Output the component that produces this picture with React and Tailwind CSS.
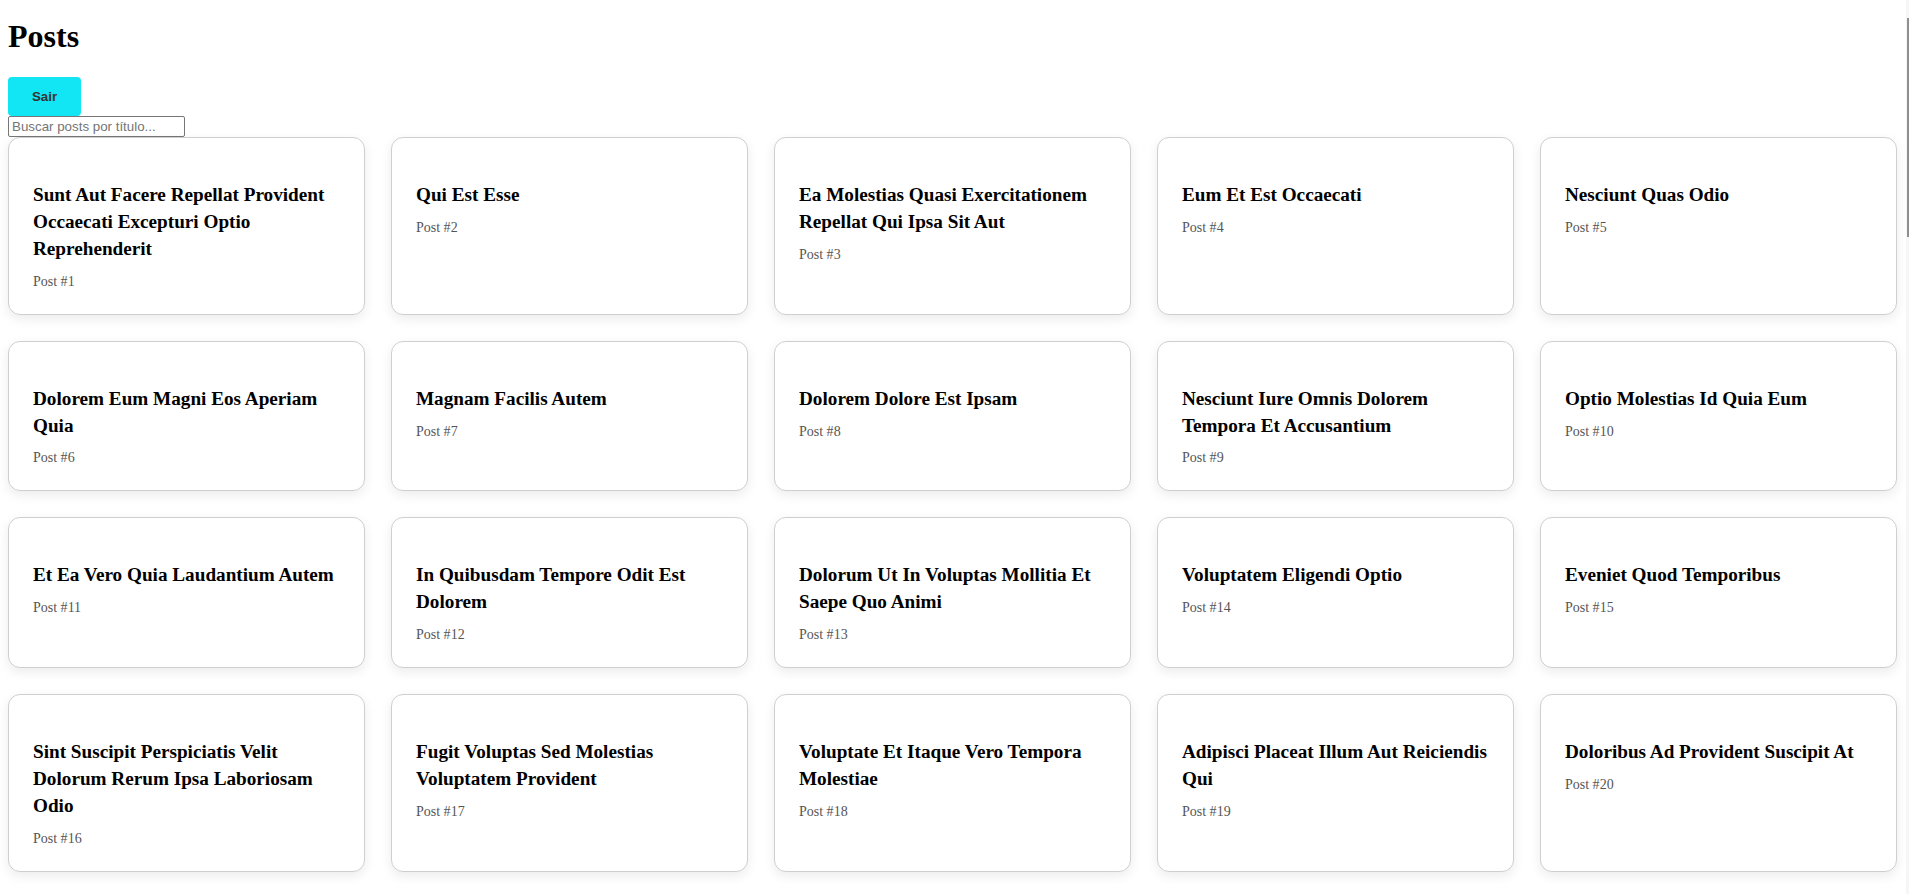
import React from "react";

const posts = [
  "Sunt Aut Facere Repellat Provident Occaecati Excepturi Optio Reprehenderit",
  "Qui Est Esse",
  "Ea Molestias Quasi Exercitationem Repellat Qui Ipsa Sit Aut",
  "Eum Et Est Occaecati",
  "Nesciunt Quas Odio",
  "Dolorem Eum Magni Eos Aperiam Quia",
  "Magnam Facilis Autem",
  "Dolorem Dolore Est Ipsam",
  "Nesciunt Iure Omnis Dolorem Tempora Et Accusantium",
  "Optio Molestias Id Quia Eum",
  "Et Ea Vero Quia Laudantium Autem",
  "In Quibusdam Tempore Odit Est Dolorem",
  "Dolorum Ut In Voluptas Mollitia Et Saepe Quo Animi",
  "Voluptatem Eligendi Optio",
  "Eveniet Quod Temporibus",
  "Sint Suscipit Perspiciatis Velit Dolorum Rerum Ipsa Laboriosam Odio",
  "Fugit Voluptas Sed Molestias Voluptatem Provident",
  "Voluptate Et Itaque Vero Tempora Molestiae",
  "Adipisci Placeat Illum Aut Reiciendis Qui",
  "Doloribus Ad Provident Suscipit At",
].map((title, i) => ({ id: i + 1, title }));

const PostCard = ({ post }) => (
  <div className="bg-white border border-[#cfcfcf] rounded-[12px] px-6 pt-6 pb-6 shadow-[0_4px_12px_rgba(0,0,0,0.08)]">
    <h3 className="mt-[20px] mb-[11px] text-[19.2px] leading-[26.88px] font-bold text-black">
      {post.title}
    </h3>
    <p className="text-[14px] leading-[16px] text-[#555]">Post #{post.id}</p>
  </div>
);

export default function App() {
  return (
    <div className="relative h-[894px] overflow-hidden bg-white pl-2 font-['Liberation_Serif','Times_New_Roman',serif]">
      <h1 className="mt-[18px] mb-[22px] text-[32px] leading-[37px] font-bold text-black">
        Posts
      </h1>
      <button className="block w-[73px] h-[39px] rounded-[4px] bg-[#12e5f3] text-[13.33px] font-bold text-[#333] font-['Liberation_Sans',Arial,sans-serif]">
        Sair
      </button>
      <input
        type="text"
        placeholder="Buscar posts por título..."
        className="block w-[177px] h-[21px] border border-[#767676] rounded-[2px] px-[3px] text-[13.33px] text-black placeholder:text-[#757575] font-['Liberation_Sans',Arial,sans-serif] outline-none"
      />
      <div className="grid grid-cols-5 gap-[26px] w-[1889px]">
        {posts.map((post) => (
          <PostCard key={post.id} post={post} />
        ))}
      </div>

      <div className="absolute right-0 top-0 h-full w-[3px] bg-[#f6f6f6]" />
      <div className="absolute right-0 top-[18px] h-[219px] w-[2px] bg-[#8f8f8f]" />
    </div>
  );
}
